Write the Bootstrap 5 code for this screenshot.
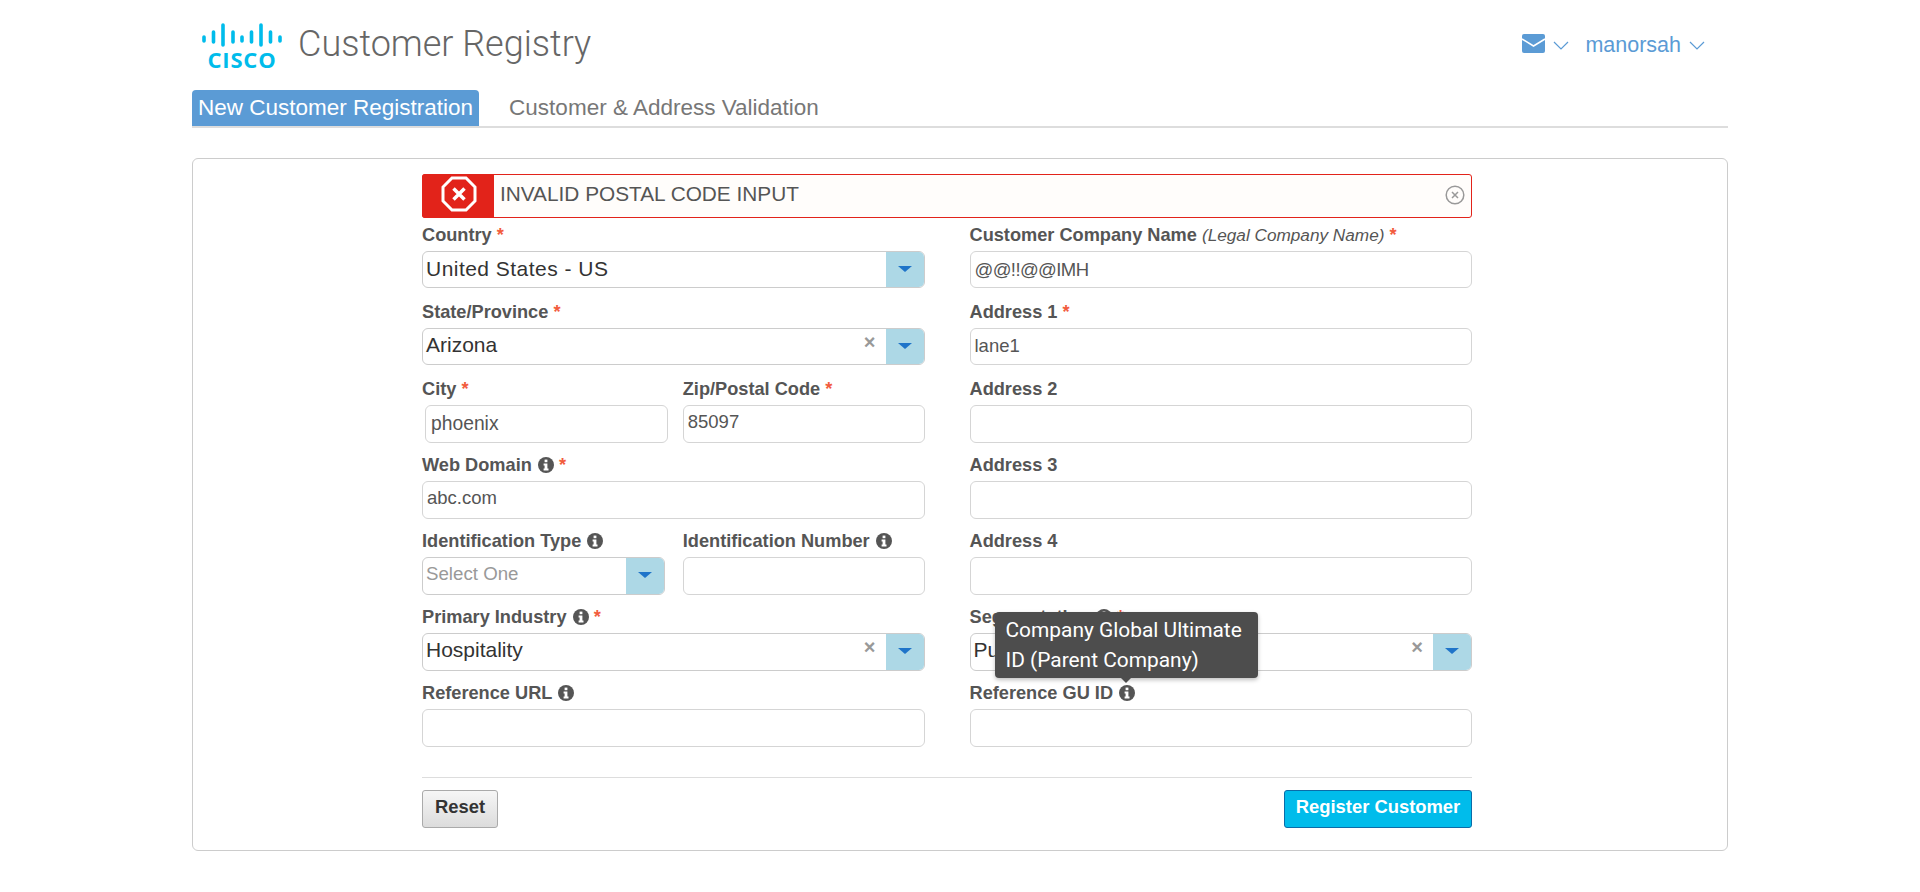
<!DOCTYPE html>
<html lang="en">
<head>
    <meta charset="UTF-8">
    <meta name="viewport" content="width=device-width, initial-scale=1.0">
    <title>Customer Registry</title>
    <link href="https://cdn.jsdelivr.net/npm/bootstrap@5.3.0/dist/css/bootstrap.min.css" rel="stylesheet">
    <style>
        body {
            font-family: "Liberation Sans", Arial, sans-serif;
            color: #555;
            background: #fff;
        }

        .page-wrap { width: 1536px; margin: 0 auto; }

        /* header */
        .top-bar { height: 90px; padding-left: 10px; padding-right: 23px; }
        .logo-mark { overflow: visible; }
        .app-title {
            font-family: Roboto, "Liberation Sans", sans-serif;
            font-weight: 300;
            font-size: 36px;
            color: #666;
            margin: 0 0 0 16px;
        }
        .user-link { color: #5b9bd5; font-size: 21.5px; text-decoration: none; }

        /* tabs */
        .reg-tabs { border-bottom: 2px solid #ddd; height: 38px; }
        .reg-tabs .nav-link {
            height: 36px;
            padding: 0 6px;
            font-size: 22.500px;
            line-height: 36px;
            color: #777;
            border-radius: 4px 4px 0 0;
        }
        .reg-tabs .nav-link.active { background: #5b9bd5; color: #fff; margin-right: 24px; }

        /* panel */
        .form-panel {
            margin-top: 30px;
            border: 1px solid #ccc;
            border-radius: 6px;
            padding: 15px 255px 22px 229px;
        }

        .error-bar {
            height: 44px;
            border: 1px solid #e2231a;
            border-radius: 3px;
            background: #fffdfb;
            font-size: 20.800px;
            color: #555;
        }
        .error-msg { padding: 0 0 4px 6px; }
        .error-icon {
            width: 72px;
            margin: -1px 0 -1px -1px;
            padding: 0 0 4px 2px;
            background: #e2231a;
            border-radius: 3px 0 0 3px;
        }
        .error-close { margin-bottom: 2px; margin-right: 6px; }

        .fields { --bs-gutter-x: 45px; }
        .pair { --bs-gutter-x: 16px; }
        .pair-right { padding-left: 9.5px; }

        .field-label {
            display: block;
            height: 38px;
            padding-top: 12px;
            margin: 0;
            font-size: 18.200px;
            line-height: 20px;
            font-weight: 700;
            color: #555;
            white-space: nowrap;
        }
        .field-label.first { height: 33px; padding-top: 7px; }
        .field-label.tall { height: 40px; padding-top: 14px; }
        .field-label em { font-weight: 400; font-size: 17.200px; }
        .req { color: #f25c3d; }
        .info-ico { width: 16px; height: 16px; vertical-align: -2px; margin-left: 1px; }

        .field-input.form-control {
            height: 38px;
            padding: 0 4px 4px;
            font-size: 18.500px;
            color: #555;
            border: 1px solid #d5d5d5;
            border-radius: 6px;
        }
        .field-input.short { height: 37px; padding-bottom: 2px; }
        .field-input.tight { letter-spacing: -.6px; padding-bottom: 0; }
        .city-input.form-control {
            margin-left: 3px;
            width: 100%;
            padding: 0 0 0 5px;
            font-size: 19.300px;
        }

        .combo {
            height: 38px;
            border: 1px solid #ccc;
            border-radius: 6px;
            overflow: hidden;
            font-size: 21px;
            color: #333;
        }
        .combo.short { height: 37px; }
        .combo-text { padding: 0 0 3px 3px; white-space: nowrap; }
        .combo-text.raised { padding-bottom: 5px; }
        .combo-text.wide { letter-spacing: .47px; padding-bottom: 2px; }
        .combo-text.hint { color: #999; font-size: 18.700px; }
        .combo-clear { color: #999; font-size: 20px; font-weight: 700; margin-right: 10px; margin-top: -10px; }
        .combo-arrow { width: 38px; background: #add8e6; }
        .combo-arrow i {
            display: block;
            margin-top: -2px;
            border-left: 7px solid transparent;
            border-right: 7px solid transparent;
            border-top: 6px solid #1f74c9;
        }

        .tip-box {
            position: absolute;
            left: 25px;
            bottom: 31px;
            width: 263px;
            padding: 3px 8px 3px 11px;
            background: #4d4d4d;
            color: #fff;
            border-radius: 4px;
            box-shadow: 0 2px 4px rgba(0, 0, 0, .25);
            font-family: Roboto, sans-serif;
            font-size: 20.900px;
            font-weight: 400;
            line-height: 30px;
            white-space: normal;
            z-index: 5;
        }
        .tip-box::after {
            content: "";
            position: absolute;
            left: 126px;
            bottom: -5px;
            border-left: 5px solid transparent;
            border-right: 5px solid transparent;
            border-top: 5px solid #4d4d4d;
        }

        .form-rule { margin: 30px 0 12px; border-color: #ddd; opacity: 1; }
        .btn-reset, .btn-reset:hover {
            width: 76px;
            height: 38px;
            padding: 0 0 4px;
            font-size: 18.400px;
            font-weight: 700;
            color: #333;
            background: linear-gradient(#f6f6f6, #dcdcdc);
            border: 1px solid #aaa;
            border-radius: 3px;
        }
        .btn-register, .btn-register:hover {
            width: 188px;
            height: 38px;
            padding: 0 0 4px;
            font-size: 18.400px;
            font-weight: 700;
            color: #fff;
            background: #00bceb;
            border: 1px solid #0a6ca8;
            border-radius: 3px;
        }
    </style>
</head>
<body>
    <svg width="0" height="0" class="position-absolute">
        <symbol id="info" viewBox="0 0 16 16">
            <circle cx="8" cy="8" r="8" fill="#555"/>
            <rect x="6.6" y="2.6" width="2.8" height="2.6" fill="#fff"/>
            <path d="M5.6 6.4h3.8v5h1.1v2H5.6v-2h1v-3h-1z" fill="#fff"/>
        </symbol>
    </svg>

    <div class="page-wrap">
        <header class="top-bar d-flex align-items-center justify-content-between">
            <div class="d-flex align-items-center">
                <svg class="logo-mark" width="80" height="50" viewBox="0 0 80 50">
                    <g fill="none" stroke="#00bceb" stroke-width="3.600" stroke-linecap="round">
                        <path d="M2 17v4M11.500 12v10M21 5v20M31 12v10M40 17v4M49.500 12v10M59 5v20M68.500 12v10M78 17v4"/>
                    </g>
                    <text x="40" y="48" text-anchor="middle" fill="#00bceb" font-family="Open Sans, sans-serif" font-weight="700" font-size="22" letter-spacing=".8">CISCO</text>
                </svg>
                <h1 class="app-title">Customer Registry</h1>
            </div>
            <div class="d-flex align-items-center">
                <svg class="mb-1" width="23" height="19" viewBox="0 0 23 19">
                    <rect width="23" height="19" rx="2" fill="#5b9bd5"/>
                    <path d="M0 5l11.500 7L23 5" fill="none" stroke="#fff" stroke-width="1.500"/>
                </svg>
                <svg class="ms-2" width="16" height="9" viewBox="0 0 16 9"><path d="M1 1l7 7 7-7" fill="none" stroke="#5b9bd5" stroke-width="1.200"/></svg>
                <a href="#" class="user-link ms-3 me-2">manorsah</a>
                <svg width="16" height="9" viewBox="0 0 16 9"><path d="M1 1l7 7 7-7" fill="none" stroke="#5b9bd5" stroke-width="1.200"/></svg>
            </div>
        </header>

        <ul class="nav reg-tabs">
            <li class="nav-item"><a class="nav-link active" href="#">New Customer Registration</a></li>
            <li class="nav-item"><a class="nav-link" href="#">Customer &amp; Address Validation</a></li>
        </ul>

        <form class="form-panel">
            <div class="error-bar d-flex align-items-center">
                <div class="error-icon align-self-stretch d-flex align-items-center justify-content-center">
                    <svg width="36" height="36" viewBox="0 0 36 36">
                        <path d="M11 2h14l9 9v14l-9 9H11l-9-9V11z" fill="none" stroke="#fff" stroke-width="3"/>
                        <path d="M12.500 12.500l11 11M23.500 12.500l-11 11" stroke="#fff" stroke-width="3.500"/>
                    </svg>
                </div>
                <span class="error-msg flex-grow-1">INVALID POSTAL CODE INPUT</span>
                <svg class="error-close" width="20" height="20" viewBox="0 0 20 20">
                    <circle cx="10" cy="10" r="8.800" fill="none" stroke="#999" stroke-width="1.500"/>
                    <path d="M7 7l6 6M13 7l-6 6" stroke="#999" stroke-width="1.500"/>
                </svg>
            </div>

            <div class="row fields">
                <div class="col-6">
                    <label class="field-label first">Country <span class="req">*</span></label>
                    <div class="combo short d-flex align-items-center">
                        <span class="combo-text wide flex-grow-1">United States - US</span>
                        <span class="combo-arrow align-self-stretch d-flex align-items-center justify-content-center"><i></i></span>
                    </div>

                    <label class="field-label tall">State/Province <span class="req">*</span></label>
                    <div class="combo short d-flex align-items-center">
                        <span class="combo-text flex-grow-1">Arizona</span>
                        <span class="combo-clear">×</span>
                        <span class="combo-arrow align-self-stretch d-flex align-items-center justify-content-center"><i></i></span>
                    </div>

                    <div class="row pair">
                        <div class="col-6">
                            <label class="field-label tall">City <span class="req">*</span></label>
                            <input class="form-control field-input city-input" value="phoenix">
                        </div>
                        <div class="col-6 pair-right">
                            <label class="field-label tall">Zip/Postal Code <span class="req">*</span></label>
                            <input class="form-control field-input" value="85097">
                        </div>
                    </div>

                    <label class="field-label">Web Domain <svg class="info-ico"><use href="#info"/></svg> <span class="req">*</span></label>
                    <input class="form-control field-input" value="abc.com">

                    <div class="row pair">
                        <div class="col-6">
                            <label class="field-label">Identification Type <svg class="info-ico"><use href="#info"/></svg></label>
                            <div class="combo d-flex align-items-center">
                                <span class="combo-text hint flex-grow-1">Select One</span>
                                <span class="combo-arrow align-self-stretch d-flex align-items-center justify-content-center"><i></i></span>
                            </div>
                        </div>
                        <div class="col-6 pair-right">
                            <label class="field-label">Identification Number <svg class="info-ico"><use href="#info"/></svg></label>
                            <input class="form-control field-input">
                        </div>
                    </div>

                    <label class="field-label">Primary Industry <svg class="info-ico"><use href="#info"/></svg> <span class="req">*</span></label>
                    <div class="combo d-flex align-items-center">
                        <span class="combo-text raised flex-grow-1">Hospitality</span>
                        <span class="combo-clear">×</span>
                        <span class="combo-arrow align-self-stretch d-flex align-items-center justify-content-center"><i></i></span>
                    </div>

                    <label class="field-label">Reference URL <svg class="info-ico"><use href="#info"/></svg></label>
                    <input class="form-control field-input">
                </div>

                <div class="col-6">
                    <label class="field-label first">Customer Company Name <em>(Legal Company Name)</em> <span class="req">*</span></label>
                    <input class="form-control field-input short tight" value="@@!!@@IMH">

                    <label class="field-label tall">Address 1 <span class="req">*</span></label>
                    <input class="form-control field-input short" value="lane1">

                    <label class="field-label tall">Address 2</label>
                    <input class="form-control field-input">

                    <label class="field-label">Address 3</label>
                    <input class="form-control field-input">

                    <label class="field-label">Address 4</label>
                    <input class="form-control field-input">

                    <label class="field-label">Segmentation <svg class="info-ico"><use href="#info"/></svg> <span class="req">*</span></label>
                    <div class="combo d-flex align-items-center">
                        <span class="combo-text raised flex-grow-1">Pu</span>
                        <span class="combo-clear">×</span>
                        <span class="combo-arrow align-self-stretch d-flex align-items-center justify-content-center"><i></i></span>
                    </div>

                    <label class="field-label position-relative">Reference GU ID <svg class="info-ico"><use href="#info"/></svg>
                        <span class="tip-box">Company Global Ultimate ID (Parent Company)</span>
                    </label>
                    <input class="form-control field-input">
                </div>
            </div>

            <hr class="form-rule">

            <div class="d-flex justify-content-between">
                <button type="button" class="btn btn-reset">Reset</button>
                <button type="button" class="btn btn-register">Register Customer</button>
            </div>
        </form>
    </div>

    <script src="https://cdn.jsdelivr.net/npm/bootstrap@5.3.0/dist/js/bootstrap.bundle.min.js"></script>
</body>
</html>
